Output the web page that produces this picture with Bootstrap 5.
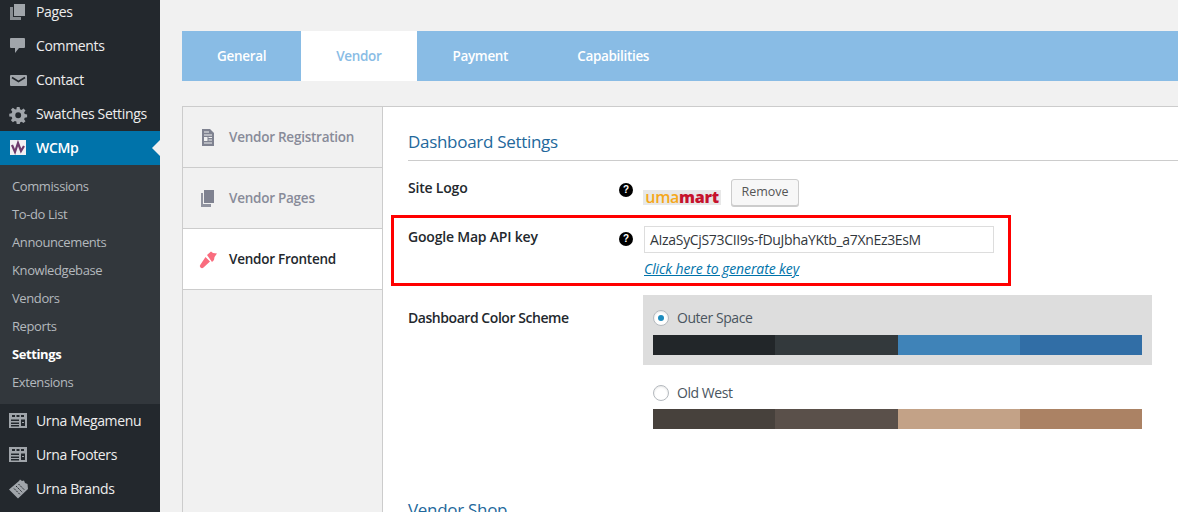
<!doctype html>
<html lang="en"><head><meta charset="utf-8"><title>WCMp Settings</title>
<link rel="stylesheet" href="https://cdn.jsdelivr.net/npm/bootstrap@5.3.0/dist/css/bootstrap.min.css">
<style>
html,body{height:512px;overflow:hidden}
body{background:#f1f1f1;font-family:"Open Sans","Noto Sans",sans-serif;font-size:13px;color:#32373c;width:1178px}
.shell{height:512px;overflow:hidden}
.wpside{width:160px;flex:none;background:#23282d;height:512px;overflow:hidden}
.wpside-inner{margin-top:-5px}
.wpitem{height:34px;color:#eee;font-size:14px;letter-spacing:-.35px;padding-left:9px;gap:7px;white-space:nowrap}
.wpitem span{padding-bottom:2px}
.wpitem svg{width:20px;height:20px;flex:none;fill:#a0a5aa}
.wpitem.now{background:#0073aa;color:#fff;position:relative;font-weight:600}
.wpitem.now::after{content:"";position:absolute;right:0;top:9px;border:8px solid transparent;border-right-color:#f1f1f1;border-left:0}
.wpsub{background:#32373c;padding:7px 0 8px}
.wpsub div{height:28px;line-height:28px;padding-left:12px;font-size:13px;letter-spacing:-.4px;color:#b4b9be;white-space:nowrap}
.wpsub div.cur{color:#fff;font-weight:700}
.mainpane{flex:1;min-width:0;padding:31px 0 0 22px}
.tabbar{background:#89bce5;height:50px}
.tabitem{padding:0 35px;line-height:50px;font-size:13.5px;font-weight:600;letter-spacing:-.32px;color:#fff}
.tabitem.on{background:#fff;color:#89bce5;padding-right:36px}
.tabitem.on+.tabitem{padding-right:34px}
.panelwrap{margin-top:25px;border-top:1px solid #ccc;border-left:1px solid #ccc;height:500px}
.vtabs{width:200px;flex:none;border-right:1px solid #ccc}
.vtab{height:61px;border-bottom:1px solid #ccc;padding-left:16px;gap:11px;font-size:13.5px;font-weight:600;letter-spacing:-.25px;color:#888b99}
.vtab svg{width:19px;height:19px;flex:none;fill:#7f8290}
.vtab.on{background:#fff;color:#23282d}
.vtab.on svg{fill:#f96c7e}
.setpane{flex:1;background:#fff;padding:23px 0 0 25px;min-width:0}
.sethead{font-size:17px;font-weight:500;color:#23689b;letter-spacing:-.3px;margin:0;line-height:24px;padding-bottom:6px;border-bottom:1px solid #ccc}
.setlabel{width:211px;flex:none;font-size:14px;line-height:20px;font-weight:600;letter-spacing:-.2px;color:#23282d}
.schemelabel{padding-top:13px;letter-spacing:-.45px}
.helpdot{width:14px;height:14px;border-radius:50%;background:#000;color:#fff;font:700 10px/14px "Liberation Sans",sans-serif;text-align:center;flex:none;margin:5px 11px 0 0}
.logorow{margin-top:17px;height:28px}
.logobox{width:78px;height:15px;background:#e8e8e8;font:700 16px/14px "Open Sans",sans-serif;letter-spacing:-.3px;margin:12px 10px 0 -1px;text-align:center;white-space:nowrap}
.logobox i{font-style:normal;font-weight:600;color:#f5a81c}.logobox b{color:#c6132c}
.rmbtn{width:68px;height:27px;padding:0;margin-top:1px;background:#f7f7f7;border:1px solid #ccc;border-radius:3px;color:#555;font-size:12.5px;box-shadow:0 1px 0 #ccc}
.redbox{margin:9px 0 0 -17px;width:620px;height:71px;border:3px solid #f00;padding:8px 0 0 14px}
.redbox .setlabel{padding-top:1px}
.redbox .helpdot{margin-top:6px}
.keyinput{width:350px;height:27px;border:1px solid #ddd;padding:0 5px;font-size:14px;letter-spacing:-.33px;color:#32373c;line-height:25px;background:#fff}
.genlink{display:block;font-size:14px;font-style:italic;color:#0073aa;margin-top:8px;line-height:16px;letter-spacing:-.1px}
.schemerow{margin-top:9px}
.schemes{width:509px;flex:none;margin-left:24px}
.scheme{padding:14px 10px 10px;height:70px}
.scheme.sel{background:#ddd}
.scheme+.scheme{padding-top:19px}
.scheme+.scheme .swatches{margin-top:7px}
.radiodot{width:16px;height:16px;border-radius:50%;border:1px solid #b4b9be;background:#fff;flex:none;margin-right:8px;display:flex;align-items:center;justify-content:center;box-shadow:inset 0 1px 2px rgba(0,0,0,.1)}
.radiodot.checked::after{content:"";width:6px;height:6px;border-radius:50%;background:#1e8cbe}
.schemename{font-size:14px;line-height:18px;letter-spacing:-.45px;color:#4a5560}
.swatches{height:20px;margin-top:8px;width:489px}
.swatches span{flex:1}
.shop{font-size:17px;font-weight:500;color:#23689b;letter-spacing:-.3px;margin:63px 0 0;line-height:24px}
</style></head><body>
<div class="shell d-flex">
<nav class="wpside"><div class="wpside-inner">
<div class="wpitem d-flex align-items-center"><svg viewBox="0 0 20 20"><path d="M5 2h11v12H5z"/><path d="M1 5h3v10h8v3H1z" opacity=".8"/></svg><span>Pages</span></div>
<div class="wpitem d-flex align-items-center"><svg viewBox="0 0 20 20"><path d="M2 2h13a1 1 0 0 1 1 1v8a1 1 0 0 1-1 1H10l-4 5v-5H2a1 1 0 0 1-1-1V3a1 1 0 0 1 1-1z"/></svg><span>Comments</span></div>
<div class="wpitem d-flex align-items-center"><svg viewBox="0 0 20 20"><rect x="1" y="5" width="17" height="11" rx="1"/><path d="M3 7.500l6.500 4 6.500-4" fill="none" stroke="#23282d" stroke-width="1.600"/></svg><span>Contact</span></div>
<div class="wpitem d-flex align-items-center"><svg viewBox="0 0 20 20"><path transform="translate(0 2) scale(.92)" fill-rule="evenodd" d="M8.500 1h3l.5 2.600 1.600.7 2.200-1.500 2.100 2.100-1.500 2.200.7 1.600 2.600.5v3l-2.600.5-.7 1.600 1.500 2.200-2.100 2.100-2.200-1.500-1.600.7-.5 2.600h-3L8 16.900l-1.600-.7-2.200 1.500-2.100-2.100 1.500-2.200-.7-1.600L.3 11.300v-3l2.600-.5.7-1.600-1.500-2.200 2.100-2.100 2.200 1.500L8 3.700zM10 6.800a3.200 3.200 0 1 0 0 6.400 3.200 3.200 0 0 0 0-6.400z"/></svg><span>Swatches Settings</span></div>
<div class="wpitem now d-flex align-items-center"><svg viewBox="0 0 20 20"><rect x="1" y="2" width="16" height="15" fill="#f2f0f3"/><path d="M3 7l3 7 3-9 3 8 3-5" fill="none" stroke="#6e3a6b" stroke-width="2.200"/></svg><span>WCMp</span></div>
<div class="wpsub"><div>Commissions</div><div>To-do List</div><div>Announcements</div><div>Knowledgebase</div><div>Vendors</div><div>Reports</div><div class="cur">Settings</div><div>Extensions</div></div>
<div class="wpitem d-flex align-items-center"><svg viewBox="0 0 20 20"><path fill-rule="evenodd" d="M0 2h18v15H0zM3 4v2h3V4zm4.500 0v2h3V4zM12 4v2h3V4zM2 8.500V10h8V8.500zM12 8.500V15h4V8.500zM2 11.500V13h8v-1.500zM2 14v1.500h8V14z"/><path d="M13 11.500h2" stroke="#a0a5aa"/></svg><span>Urna Megamenu</span></div>
<div class="wpitem d-flex align-items-center"><svg viewBox="0 0 20 20"><path fill-rule="evenodd" d="M0 2h18v15H0zM3 4v2h3V4zm4.500 0v2h3V4zM12 4v2h3V4zM2 8.500V10h8V8.500zM12 8.500V15h4V8.500zM2 11.500V13h8v-1.500zM2 14v1.500h8V14z"/><path d="M13 11.500h2" stroke="#a0a5aa"/></svg><span>Urna Footers</span></div>
<div class="wpitem d-flex align-items-center"><svg viewBox="0 0 20 20"><path d="M0 10.500L10 2l1-1.500 2 1.500 2-.5 1 2.500 2.500 1 .5 5L9 19.500z"/><path d="M7 7l6.500 6.500M5 9.500l6.500 6.500M9.500 5l6 6" stroke="#23282d" stroke-width="1" stroke-dasharray="2 1" fill="none"/></svg><span>Urna Brands</span></div>
</div></nav>
<main class="mainpane">
<div class="tabbar d-flex">
<div class="tabitem">General</div><div class="tabitem on">Vendor</div><div class="tabitem">Payment</div><div class="tabitem">Capabilities</div>
</div>
<div class="panelwrap d-flex">
<div class="vtabs">
<div class="vtab d-flex align-items-center"><svg viewBox="0 0 19 19"><path fill-rule="evenodd" d="M3 1h8l4 4v13H3zM5 3.500v1h5v-1zM5 6.500v1h8v-1zM5 9v4h3.500V9zM9.500 9v1H13V9zM9.500 11.500v1H13v-1zM5 14.500v1h8v-1z"/></svg><span>Vendor Registration</span></div>
<div class="vtab d-flex align-items-center"><svg viewBox="0 0 19 19"><path d="M5 1h10v13H5z"/><path d="M2 4h2v11h8v3H2z" opacity=".85"/></svg><span>Vendor Pages</span></div>
<div class="vtab on d-flex align-items-center"><svg viewBox="0 0 19 19"><path d="M8 5L12 1.500l2 1.500 4 .5-2.500 3.500-.5 3-2 2z"/><path d="M6.500 7L11 11.500 4.500 17.500a2 2 0 0 1-3-3z"/></svg><span>Vendor Frontend</span></div>
</div>
<section class="setpane">
<h3 class="sethead">Dashboard Settings</h3>
<div class="logorow d-flex">
<div class="setlabel">Site Logo</div><div class="helpdot">?</div>
<div class="logobox"><i>uma</i><b>mart</b></div>
<button type="button" class="rmbtn">Remove</button>
</div>
<div class="redbox d-flex">
<div class="setlabel">Google Map API key</div><div class="helpdot">?</div>
<div><div class="keyinput">AIzaSyCjS73CII9s-fDuJbhaYKtb_a7XnEz3EsM</div><a class="genlink" href="#">Click here to generate key</a></div>
</div>
<div class="schemerow d-flex">
<div class="setlabel schemelabel">Dashboard Color Scheme</div>
<div class="schemes">
<div class="scheme sel"><div class="d-flex align-items-center"><span class="radiodot checked"></span><span class="schemename">Outer Space</span></div>
<div class="swatches d-flex"><span style="background:#222629"></span><span style="background:#33393c"></span><span style="background:#3f83b8"></span><span style="background:#316ea6"></span></div></div>
<div class="scheme"><div class="d-flex align-items-center"><span class="radiodot"></span><span class="schemename">Old West</span></div>
<div class="swatches d-flex"><span style="background:#47413c"></span><span style="background:#5a504a"></span><span style="background:#c3a287"></span><span style="background:#ab8264"></span></div></div>
</div>
</div>
<h3 class="shop">Vendor Shop</h3>
</section>
</div>
</main>
</div>
</body></html>
